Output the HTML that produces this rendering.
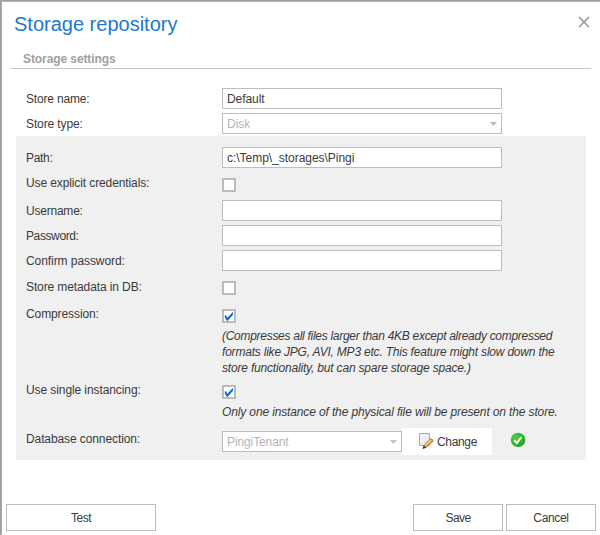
<!DOCTYPE html>
<html><head><meta charset="utf-8"><title>Storage repository</title>
<style>
*{box-sizing:border-box;margin:0;padding:0}
html,body{width:600px;height:535px;overflow:hidden;background:#fff}
body{position:relative;font-family:"Liberation Sans",sans-serif;font-size:12px;color:#3a3a3a}
.bl{position:absolute;left:0;top:0;width:2px;height:535px;background:#a0a0a0;border-right:1px solid #adadad}
.bt{position:absolute;left:0;top:0;width:600px;height:2px;background:#a0a0a0;border-bottom:1px solid #b0b0b0}
h1{position:absolute;left:14px;top:10px;font-size:20px;font-weight:normal;color:#2079cf;line-height:28px;white-space:nowrap}
.x{position:absolute;left:578px;top:16px;width:12px;height:12px}
.sec{position:absolute;left:23px;top:52px;font-weight:bold;color:#a0a0a0;line-height:15px;white-space:nowrap;letter-spacing:-0.09px}
.hr{position:absolute;left:11px;top:68px;width:580px;height:1px;background:#c6c6c6}
.panel{position:absolute;left:16px;top:136px;width:570px;height:324px;background:#f0f0f0}
.l{position:absolute;left:26px;line-height:15px;white-space:nowrap}
.in{position:absolute;left:222px;width:280px;height:21px;border:1px solid #bdbdbd;background:#fff;line-height:21px;padding-left:4px;white-space:nowrap}
.dis{color:#b4b4b4}
.cb{position:absolute;left:222px;width:14px;height:14px;border:2px solid #bcbcbc;background:#fff}
.cb svg{position:absolute;left:0;top:0;width:10px;height:10px}
.it{position:absolute;left:222px;font-style:italic;line-height:16px;white-space:nowrap}
.btn{position:absolute;height:27px;border:1px solid #bdbdbd;background:#fff;text-align:center;line-height:27px}
.arr{position:absolute;width:0;height:0;border-left:3.5px solid transparent;border-right:3.5px solid transparent;border-top:4px solid #bdbdbd}
.ico{position:absolute}
</style></head><body>
<div class="bt"></div><div class="bl"></div>
<h1>Storage repository</h1>
<svg class="x" viewBox="0 0 12 12"><path d="M1 1L11 11M11 1L1 11" stroke="#8a8a8a" stroke-width="1.3" fill="none"/></svg>
<div class="sec">Storage settings</div>
<div class="hr"></div>
<div class="panel"></div>
<div class="l" style="top:92px;letter-spacing:-0.18px">Store name:</div>
<div class="l" style="top:117px;letter-spacing:-0.11px">Store type:</div>
<div class="l" style="top:151px;letter-spacing:-0.3px">Path:</div>
<div class="l" style="top:176px;letter-spacing:-0.11px">Use explicit credentials:</div>
<div class="l" style="top:204px;letter-spacing:-0.22px">Username:</div>
<div class="l" style="top:229px;letter-spacing:-0.39px">Password:</div>
<div class="l" style="top:254px;letter-spacing:-0.07px">Confirm password:</div>
<div class="l" style="top:280px;letter-spacing:-0.11px">Store metadata in DB:</div>
<div class="l" style="top:307px;letter-spacing:-0.1px">Compression:</div>
<div class="l" style="top:383px;letter-spacing:-0.09px">Use single instancing:</div>
<div class="l" style="top:432px;letter-spacing:-0.1px">Database connection:</div>
<div class="it" style="top:328px;letter-spacing:-0.286px">(Compresses all files larger than 4KB except already compressed</div>
<div class="it" style="top:344px;letter-spacing:-0.207px">formats like JPG, AVI, MP3 etc. This feature might slow down the</div>
<div class="it" style="top:360px;letter-spacing:-0.184px">store functionality, but can spare storage space.)</div>
<div class="it" style="top:404px;letter-spacing:-0.134px">Only one instance of the physical file will be present on the store.</div>
<div class="in" style="top:88px;letter-spacing:-0.07px">Default</div>
<div class="in dis" style="top:113px">Disk</div>
<svg class="ico" style="left:490px;top:122px" width="7" height="4" viewBox="0 0 7 4"><path d="M0 0H7L3.5 4Z" fill="#b8b8b8"/></svg>
<div class="in" style="top:147px;letter-spacing:-0.03px">c:\Temp\_storages\Pingi</div>
<div class="in" style="top:200px"></div>
<div class="in" style="top:225px"></div>
<div class="in" style="top:250px"></div>
<div class="cb" style="top:178px"></div>
<div class="cb" style="top:281px"></div>
<div class="cb" style="top:309px"><svg viewBox="0 0 10 10"><path d="M0.8 4.6L1.6 4.1L3.4 6.7L8.6 1.3L9.1 1.5L9 3.8L3.5 9.9L3.1 9.9L0.8 6.4Z" fill="#0a6ccc"/></svg></div>
<div class="cb" style="top:385px"><svg viewBox="0 0 10 10"><path d="M0.8 4.6L1.6 4.1L3.4 6.7L8.6 1.3L9.1 1.5L9 3.8L3.5 9.9L3.1 9.9L0.8 6.4Z" fill="#0a6ccc"/></svg></div>
<div class="in dis" style="top:431px;width:180px;letter-spacing:-0.11px">PingiTenant</div>
<svg class="ico" style="left:390px;top:440px" width="7" height="4" viewBox="0 0 7 4"><path d="M0 0H7L3.5 4Z" fill="#c2c2c2"/></svg>
<div class="btn" style="left:402px;top:428px;width:90px;border:none;text-align:left;padding-left:35px;line-height:29px;letter-spacing:-0.33px">Change</div>
<svg class="ico" style="left:418px;top:432px" width="17" height="18" viewBox="0 0 17 18">
<defs><linearGradient id="pg" x1="0" y1="0" x2="1" y2="1"><stop offset="0" stop-color="#fbfcff"/><stop offset="1" stop-color="#dde2f3"/></linearGradient></defs>
<rect x="1.5" y="1.5" width="10" height="12" rx="0.4" fill="url(#pg)" stroke="#97a2d8" stroke-width="1"/>
<path d="M4.8 16.4L6.1 12.9L12.3 7Q13.5 6.3 14.6 7.5Q15.5 8.6 14.8 9.7L8.5 15.4Z" fill="#dc922c" stroke="#b87a22" stroke-width="0.6" stroke-linejoin="round"/>
<path d="M7.3 13.5L13.3 7.9" stroke="#f8dc9a" stroke-width="1.1"/>
<path d="M4.6 16.8L5.8 13.6L7.9 15.7Z" fill="#1c2858"/>
</svg>
<svg class="ico" style="left:510px;top:432px" width="16" height="16" viewBox="0 0 16 16">
<defs><radialGradient id="g" cx="0.35" cy="0.3" r="0.8"><stop offset="0" stop-color="#4fd04a"/><stop offset="0.6" stop-color="#2cb52c"/><stop offset="1" stop-color="#1f9a24"/></radialGradient></defs>
<circle cx="8.1" cy="7.9" r="7.2" fill="url(#g)"/>
<path d="M4 8.2L6.8 11L11.4 5.2" fill="none" stroke="#fff" stroke-width="2"/>
</svg>
<div class="btn" style="left:6px;top:504px;width:150px;letter-spacing:-0.5px">Test</div>
<div class="btn" style="left:413px;top:504px;width:90px;letter-spacing:-0.6px">Save</div>
<div class="btn" style="left:506px;top:504px;width:90px;letter-spacing:-0.33px">Cancel</div>
</body></html>
